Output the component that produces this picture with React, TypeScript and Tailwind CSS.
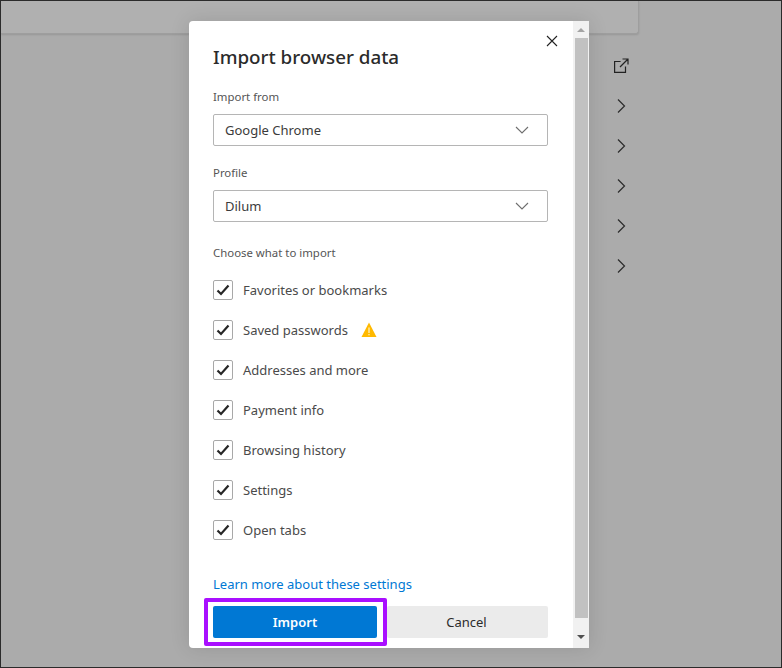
function Chevron() {
  return (
    <svg width="20" height="20" viewBox="0 0 20 20" fill="none" stroke="#2b2b2b" strokeWidth="1.2">
      <path d="M7 3.5 13.5 10 7 16.5" />
    </svg>
  );
}
function Select({ value }: { value: string }) {
  return (
    <div className="flex h-8 w-full items-center justify-between rounded-[2px] border border-[#b5b5b5] pl-[11px] pr-[18px] text-[13px] text-[#3b3b3b]">
      <span className="pt-px">{value}</span>
      <svg width="14" height="8" viewBox="0 0 14 8" fill="none" stroke="#6e6e6e" strokeWidth="1.1">
        <path d="M1 1 7 7 13 1" />
      </svg>
    </div>
  );
}
function Row({ label, warn }: { label: string; warn?: boolean }) {
  return (
    <div className="flex h-10 items-center">
      <div className="flex h-5 w-5 items-center justify-center rounded-[2px] border border-[#a8a8a8] bg-white">
        <svg width="14" height="14" viewBox="0 0 14 14" fill="none" stroke="#262626" strokeWidth="2.2">
          <path d="M1.5 7.5 5 11 12.5 2.5" />
        </svg>
      </div>
      <span className="ml-[10px] text-[13px] leading-[20px] text-[#4a4a4a]">{label}</span>
      {warn && (
        <svg className="ml-[13px]" width="16" height="16" viewBox="0 0 16 16">
          <path d="M8 0.5 15.5 15H0.5Z" fill="#ffb900" />
          <path d="M7.4 5.5h1.2v5.6H7.4zM7.4 12h1.2v1.3H7.4z" fill="#fff3c9" />
        </svg>
      )}
    </div>
  );
}
export default function App() {
  return (
    <div className="relative h-[668px] w-[782px] overflow-hidden border-l border-t border-[#2b2b2b] bg-[#ababab] font-['Noto_Sans','Open_Sans',sans-serif]">
      <div className="h-[33px] w-[638px] rounded-br-[3px] border-b border-r border-[#9e9e9e] bg-[#b0b0b0] shadow-[0_1px_2px_rgba(0,0,0,0.12)]" />
      <div className="ml-[610px] mt-[24px] flex w-5 flex-col items-center">
        <svg width="16" height="16" viewBox="0 0 16 16" fill="none" stroke="#222" strokeWidth="1.2">
          <path d="M12.5 8.5v5.9H1.6V3.5h6M9.5 1h5.5v5.5M15 1 7 9" />
        </svg>
        <div className="mt-[22px] flex flex-col gap-5">
          <Chevron /><Chevron /><Chevron /><Chevron /><Chevron />
        </div>
      </div>
      <div className="absolute bottom-0 left-0 right-0 h-px bg-[#2b2b2b]" />
      <div className="absolute right-0 top-0 h-full w-px bg-[#2b2b2b]" />

      <div className="absolute left-[188px] top-[20px] flex h-[627px] w-[400px] rounded-l-[4px] bg-white shadow-[0_0_20px_rgba(0,0,0,0.12)]">
        <div className="relative w-[384px] pl-6 pr-[25px]">
          <svg className="absolute right-[15px] top-[14px]" width="12" height="12" viewBox="0 0 12 12" fill="none" stroke="#222" strokeWidth="1.1">
            <path d="M1 1 11 11M11 1 1 11" />
          </svg>
          <h1 className="pt-[22px] text-[18.8px] font-medium leading-[28px] text-[#2b2b2b]">Import browser data</h1>
          <div className="mt-[16px] text-[11.4px] leading-[20px] text-[#555]">Import from</div>
          <div className="mt-[7px]"><Select value="Google Chrome" /></div>
          <div className="mt-[17px] text-[11.4px] leading-[20px] text-[#555]">Profile</div>
          <div className="mt-[7px]"><Select value="Dilum" /></div>
          <div className="mt-[21px] text-[11.4px] leading-[20px] text-[#555]">Choose what to import</div>
          <div className="mt-[7px] flex flex-col">
            <Row label="Favorites or bookmarks" />
            <Row label="Saved passwords" warn />
            <Row label="Addresses and more" />
            <Row label="Payment info" />
            <Row label="Browsing history" />
            <Row label="Settings" />
            <Row label="Open tabs" />
          </div>
          <a className="mt-[24px] block text-[13px] leading-[20px] text-[#0078d4]">Learn more about these settings</a>
          <div className="mt-[12px] flex h-8">
            <button className="w-[164px] rounded-[2px] bg-[#0078d4] pt-px text-[13px] font-semibold text-white">Import</button>
            <button className="ml-[10px] flex-1 rounded-[2px] bg-[#ebebeb] pr-[2px] pt-px text-[13px] text-[#2b2b2b]">Cancel</button>
          </div>
          <div className="absolute left-[15px] top-[577px] h-[48px] w-[183px] rounded-[2px] border-4 border-[#a90fff]" />
        </div>
        <div className="flex w-4 flex-col items-center bg-[#f1f1f1]">
          <div className="flex h-[17px] w-full items-center justify-center">
            <div className="h-0 w-0 border-x-[4px] border-b-[4px] border-x-transparent border-b-[#a3a3a3]" />
          </div>
          <div className="h-[580px] w-[13px] bg-[#c1c1c1]" />
          <div className="flex flex-1 w-full items-center justify-center pt-[8px]">
            <div className="h-0 w-0 border-x-[4px] border-t-[4px] border-x-transparent border-t-[#505050]" />
          </div>
        </div>
      </div>
    </div>
  );
}
